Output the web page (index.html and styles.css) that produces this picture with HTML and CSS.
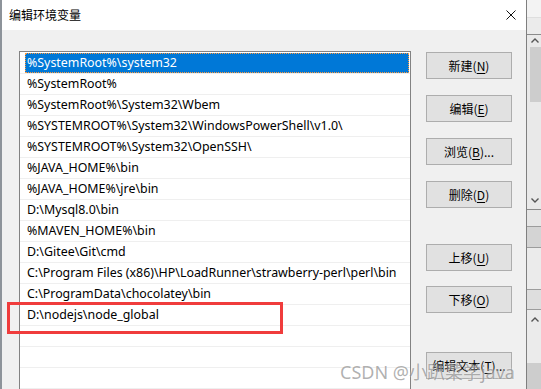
FILE: index.html
```html
<!DOCTYPE html>
<html lang="zh-CN">
<head>
    <meta charset="UTF-8">
    <meta name="viewport" content="width=device-width, initial-scale=1.0">
    <title>编辑环境变量</title>
    <link rel="stylesheet" href="styles.css">
</head>
<body>
    <div class="screen">
        <div class="edge"></div>

        <div class="dialog">
            <div class="titlebar">
                <span class="title">编辑环境变量</span>
                <svg class="close" width="10" height="10" viewBox="0 0 10 10">
                    <path d="M0.5 0.5 L9.5 9.5 M9.5 0.5 L0.5 9.5" stroke="#111" stroke-width="1" fill="none"/>
                </svg>
            </div>

            <div class="dlg-body">
                <div class="pathlist">
                    <div class="row"><div class="item selected">%SystemRoot%\system32</div></div>
                    <div class="row"><div class="item">%SystemRoot%</div></div>
                    <div class="row"><div class="item">%SystemRoot%\System32\Wbem</div></div>
                    <div class="row"><div class="item">%SYSTEMROOT%\System32\WindowsPowerShell\v1.0\</div></div>
                    <div class="row"><div class="item">%SYSTEMROOT%\System32\OpenSSH\</div></div>
                    <div class="row"><div class="item">%JAVA_HOME%\bin</div></div>
                    <div class="row"><div class="item">%JAVA_HOME%\jre\bin</div></div>
                    <div class="row"><div class="item">D:\Mysql8.0\bin</div></div>
                    <div class="row"><div class="item">%MAVEN_HOME%\bin</div></div>
                    <div class="row"><div class="item">D:\Gitee\Git\cmd</div></div>
                    <div class="row"><div class="item">C:\Program Files (x86)\HP\LoadRunner\strawberry-perl\perl\bin</div></div>
                    <div class="row"><div class="item">C:\ProgramData\chocolatey\bin</div></div>
                    <div class="row"><div class="item">D:\nodejs\node_global</div></div>
                    <div class="row"><div class="item"></div></div>
                    <div class="row"><div class="item"></div></div>
                    <div class="row"><div class="item"></div></div>
                </div>

                <div class="actions">
                    <div class="group">
                        <button class="btn">新建(<u>N</u>)</button>
                        <button class="btn">编辑(<u>E</u>)</button>
                        <button class="btn">浏览(<u>B</u>)...</button>
                        <button class="btn">删除(<u>D</u>)</button>
                    </div>
                    <div class="group move">
                        <button class="btn">上移(<u>U</u>)</button>
                        <button class="btn">下移(<u>O</u>)</button>
                    </div>
                    <div class="group text">
                        <button class="btn">编辑文本(<u>T</u>)...</button>
                    </div>
                </div>
            </div>
        </div>

        <!-- part of the window behind the dialog -->
        <div class="side">
            <div class="s-top"></div>
            <div class="s-head"></div>
            <div class="s-scroll">
                <svg class="chev" width="8" height="5" viewBox="0 0 8 5"><path d="M0.5 4.5 L4 1 L7.5 4.5" stroke="#555" stroke-width="1.4" fill="none"/></svg>
                <div class="thumb"></div>
                <svg class="chev down" width="8" height="5" viewBox="0 0 8 5"><path d="M0.5 0.5 L4 4 L7.5 0.5" stroke="#555" stroke-width="1.4" fill="none"/></svg>
            </div>
            <div class="s-cell light"></div>
            <div class="s-cell dark"></div>
            <div class="s-cell tall"></div>
            <div class="s-cell mid"></div>
            <div class="s-scroll2">
                <svg class="chev" width="8" height="5" viewBox="0 0 8 5"><path d="M0.5 4.5 L4 1 L7.5 4.5" stroke="#555" stroke-width="1.4" fill="none"/></svg>
                <div class="s-foot"></div>
            </div>
        </div>

        <div class="mark">CSDN @小趴菜学java</div>
        <div class="callout"></div>
    </div>
</body>
</html>
```

FILE: styles.css
```css
body {
    margin: 0;
    font-family: "Noto Sans", "Noto Sans CJK SC", sans-serif;
    font-size: 12px;
    color: #000;
}

.screen {
    position: relative;
    display: flex;
    width: 541px;
    height: 389px;
    overflow: hidden;
    background: #f0f0f0;
}

.edge {
    width: 2px;
    background: #8d939a;
}

/* dialog */

.dialog {
    width: 524px;
    border-right: 1px solid #7f7f7f;
    background: #f0f0f0;
    display: flex;
    flex-direction: column;
}

.titlebar {
    height: 30px;
    background: #fff;
    display: flex;
    align-items: center;
    justify-content: space-between;
    padding: 0 10px 0 7px;
}

.title {
    font-family: "Noto Sans CJK SC", sans-serif;
    font-size: 12px;
    line-height: 30px;
}

.close {
    display: block;
}

.dlg-body {
    display: flex;
    gap: 15px;
    padding: 21px 14px 0 17px;
}

.pathlist {
    width: 390px;
    height: 400px;
    flex-shrink: 0;
    border: 1px solid #828282;
    background: #fff;
    padding-top: 1px;
}

.row {
    height: 20px;
    border-bottom: 1px solid #efefef;
    padding: 0 1px 0 5px;
}

.item {
    height: 20px;
    line-height: 20px;
    padding-left: 2px;
    font-size: 12.4px;
    white-space: nowrap;
}

.item.selected {
    background: #0078d7;
    color: #fff;
    outline: 1px dotted #ff9b3d;
    outline-offset: -1px;
}

.actions {
    width: 86px;
    padding-top: 1px;
}

.group {
    display: flex;
    flex-direction: column;
    gap: 16px;
}

.group.move {
    margin-top: 36px;
    gap: 15px;
}

.group.text {
    margin-top: 39px;
}

.btn {
    height: 27px;
    width: 86px;
    border: 1px solid #adadad;
    background: #e1e1e1;
    font-family: "Noto Sans CJK SC", sans-serif;
    font-size: 12px;
    color: #000;
    padding: 0;
}

.btn u {
    text-underline-offset: 2px;
}

/* window behind, right edge */

.side {
    width: 14px;
    display: flex;
    flex-direction: column;
    background: #e8e8e8;
}

.s-top {
    height: 17px;
    background: #f3f3f3;
    border-bottom: 1px solid #dedede;
}

.s-head {
    height: 16px;
    background: #ebebeb;
    border-bottom: 1px solid #8a8a8a;
}

.s-scroll {
    height: 175px;
    border-bottom: 1px solid #8a8a8a;
    background: #e9e9e9;
    display: flex;
    flex-direction: column;
    align-items: flex-end;
    padding: 3px 0 0 0;
    box-sizing: border-box;
}

.chev {
    display: block;
    margin-right: 2px;
}

.thumb {
    width: 11px;
    height: 55px;
    margin-top: 4px;
    background: #cdcdcd;
}

.chev.down {
    margin-top: auto;
    margin-bottom: 6px;
}

.s-cell {
    border-bottom: 1px solid #9c9c9c;
}

.s-cell.light {
    height: 16px;
    background: #e6e6e6;
}

.s-cell.dark {
    height: 20px;
    background: #d4d4d4;
}

.s-cell.tall {
    height: 41px;
    background: #ebebeb;
}

.s-cell.mid {
    height: 19px;
    background: #dedede;
}

.s-scroll2 {
    flex: 1;
    display: flex;
    flex-direction: column;
    align-items: flex-end;
    padding-top: 7px;
    background: #ebebeb;
}

.s-foot {
    margin-top: auto;
    width: 100%;
    height: 26px;
    background: #cdcdcd;
}

/* overlays */

.mark {
    position: absolute;
    left: 340px;
    top: 358px;
    font-family: "Noto Sans", "Noto Sans CJK SC", sans-serif;
    font-size: 18px;
    color: rgba(110, 110, 110, 0.55);
    text-shadow: 0 0 2px rgba(255, 255, 255, 0.8);
    white-space: nowrap;
}

.callout {
    position: absolute;
    left: 7px;
    top: 302px;
    width: 276px;
    height: 32px;
    border: 3px solid #f03c3c;
    box-sizing: border-box;
}
```
